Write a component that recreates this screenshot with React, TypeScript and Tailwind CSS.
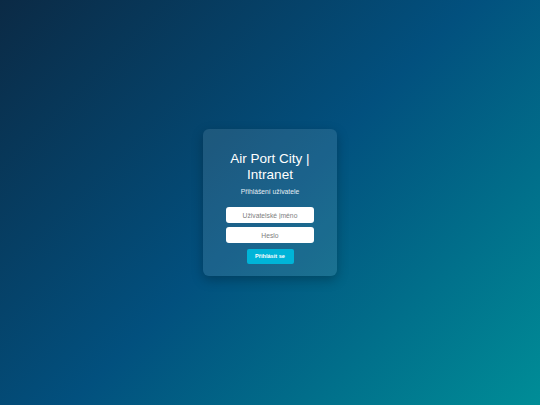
export default function App() {
  return (
    <div
      className="flex min-h-screen w-full items-center justify-center bg-[linear-gradient(135deg,#0b2a45_0%,#02507e_50%,#008d97_100%)]"
      style={{ fontFamily: '"Liberation Sans", Arial, sans-serif' }}
    >
      <div className="flex w-[134px] flex-col items-center rounded-[6px] bg-white/10 pt-[22px] pb-[12px] shadow-[0_4px_12px_rgba(0,0,0,0.25)]">
        <h2 className="text-center text-[13.5px] leading-[15.5px] text-white">
          Air Port City |<br />
          Intranet
        </h2>
        <p className="mt-[6px] text-[6.75px] leading-[8px] text-[#e6eef5]">Přihlášení uživatele</p>
        <form className="mt-[11px] flex flex-col items-center" onSubmit={(e) => e.preventDefault()}>
          <input
            type="text"
            placeholder="Uživatelské jméno"
            className="h-[16px] w-[88px] rounded-[3px] bg-white text-center text-[6.75px] text-[#333] outline-none placeholder:text-[#808080]"
          />
          <input
            type="password"
            placeholder="Heslo"
            className="mt-[4px] h-[16px] w-[88px] rounded-[3px] bg-white text-center text-[6.75px] text-[#333] outline-none placeholder:text-[#808080]"
          />
          <button
            type="submit"
            className="mt-[6px] h-[15px] w-[47px] rounded-[2px] bg-[#00b4d8] text-[5.6px] font-bold text-white"
          >
            Přihlásit se
          </button>
        </form>
      </div>
    </div>
  );
}
